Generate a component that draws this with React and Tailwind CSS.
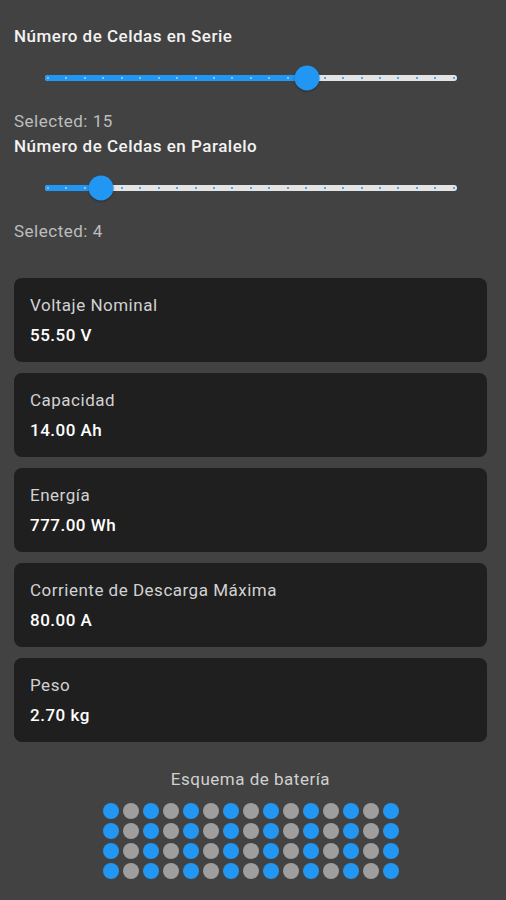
import { useState } from 'react';

const MIN = 1;
const MAX = 23;

const CellSlider = ({ value }) => {
  const pct = ((value - MIN) / (MAX - MIN)) * 100;
  const ticks = Array.from({ length: MAX - MIN + 1 }, (_, i) => i);

  return (
    <div className="h-[60px] flex items-center">
      <div className="relative ml-[31px] w-[412px] h-[6px] rounded-full bg-[#e4e4e4]">
        <div className="absolute left-0 top-0 h-full rounded-full bg-[#2196f3]" style={{ width: `${pct}%` }} />
        {ticks.map((i) => {
          const tp = (i / (MAX - MIN)) * 100;
          const active = tp <= pct;
          return (
            <span
              key={i}
              className={`absolute top-1/2 w-[2px] h-[2px] -translate-x-1/2 -translate-y-1/2 rounded-full ${active ? 'bg-[#a9d3f7]' : 'bg-[#2196f3]'}`}
              style={{ left: `calc(3px + ${tp}% * 0.985)` }}
            />
          );
        })}
        <div
          className="absolute top-1/2 w-[25px] h-[25px] -translate-x-1/2 -translate-y-1/2 rounded-full bg-[#2196f3] shadow-[0_1px_2px_rgba(0,0,0,0.35)]"
          style={{ left: `${pct}%` }}
        />
      </div>
    </div>
  );
};

const InfoCard = ({ label, value }) => (
  <div className="h-[84px] rounded-[8px] bg-[#1f1f1f] px-[16px] pt-[15px]">
    <div className="text-[17px] leading-[24px] tracking-[0.5px] text-[#d2d2d2]">{label}</div>
    <div className="mt-[6px] text-[17px] leading-[24px] tracking-[0.5px] font-medium text-white">{value}</div>
  </div>
);

const App = () => {
  const [serie] = useState(15);
  const [paralelo] = useState(4);

  const stats = [
    { label: 'Voltaje Nominal', value: '55.50 V' },
    { label: 'Capacidad', value: '14.00 Ah' },
    { label: 'Energía', value: '777.00 Wh' },
    { label: 'Corriente de Descarga Máxima', value: '80.00 A' },
    { label: 'Peso', value: '2.70 kg' },
  ];

  return (
    <div className="min-h-[900px] bg-[#424242] pl-[14px] pr-[19px] pt-[24px] pb-[20px] font-['Roboto','Liberation_Sans',sans-serif]">
      {/* Serie */}
      <div className="text-[17px] leading-[24px] tracking-[0.5px] font-medium text-[#f2f2f2]">Número de Celdas en Serie</div>
      <CellSlider value={serie} />
      <div className="mt-[1px] text-[17px] leading-[24px] tracking-[0.5px] text-[#bdbdbd]">Selected: {serie}</div>

      {/* Paralelo */}
      <div className="mt-[1px] text-[17px] leading-[24px] tracking-[0.5px] font-medium text-[#f2f2f2]">Número de Celdas en Paralelo</div>
      <CellSlider value={paralelo} />
      <div className="mt-[1px] text-[17px] leading-[24px] tracking-[0.5px] text-[#bdbdbd]">Selected: {paralelo}</div>

      {/* Results */}
      <div className="mt-[35px] flex flex-col gap-[11px]">
        {stats.map((s) => (
          <InfoCard key={s.label} label={s.label} value={s.value} />
        ))}
      </div>

      {/* Battery scheme */}
      <div className="mt-[25px] text-center text-[17px] leading-[24px] tracking-[0.5px] text-[#d0d0d0]">Esquema de batería</div>
      <div className="mt-[12px] flex flex-col items-center gap-[4px]">
        {Array.from({ length: paralelo }, (_, r) => (
          <div key={r} className="flex gap-[4px]">
            {Array.from({ length: serie }, (_, c) => (
              <span
                key={c}
                className={`w-[16px] h-[16px] rounded-full ${c % 2 === 0 ? 'bg-[#2196f3]' : 'bg-[#9e9e9e]'}`}
              />
            ))}
          </div>
        ))}
      </div>
    </div>
  );
};

export default App;
